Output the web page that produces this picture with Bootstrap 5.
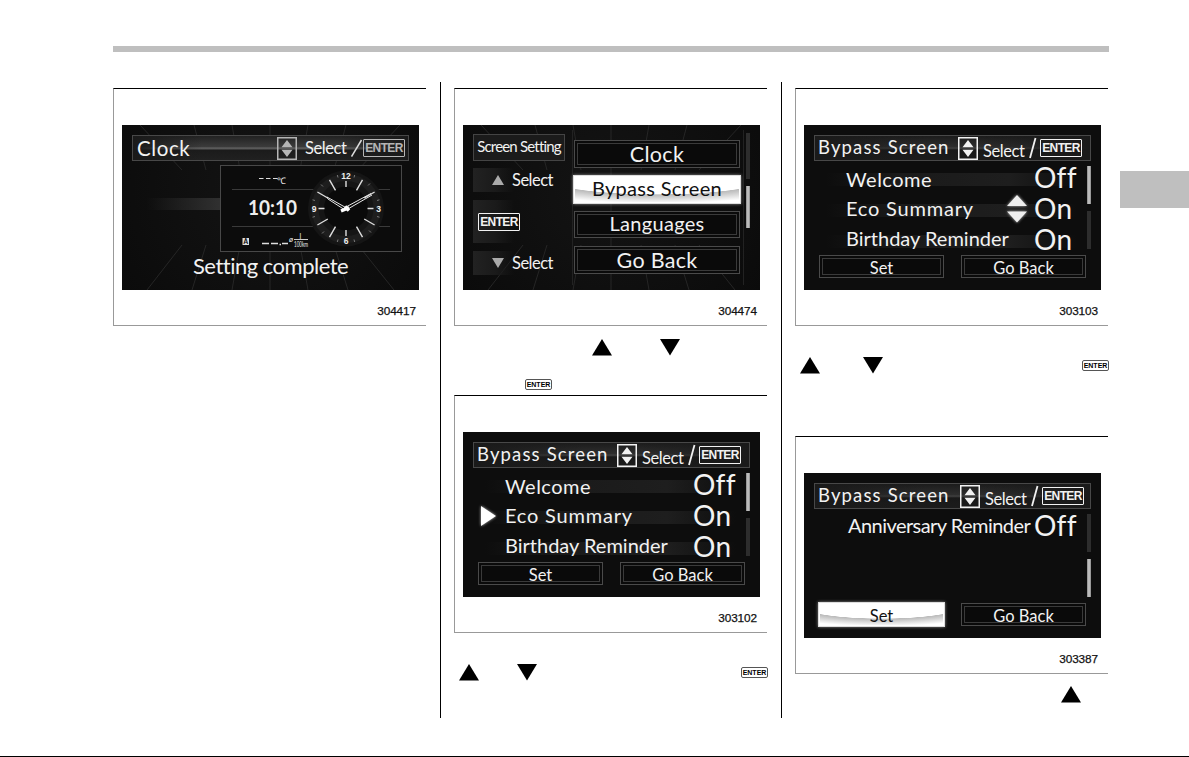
<!DOCTYPE html>
<html lang="en">

<head>
    <meta charset="UTF-8">
    <meta name="viewport" content="width=device-width, initial-scale=1">
    <title>Clock and bypass screen settings</title>
    <link href="https://cdn.jsdelivr.net/npm/bootstrap@5.3.3/dist/css/bootstrap.min.css" rel="stylesheet">
    <style>
        body {
            background-color: #fff;
            font-family: "Liberation Sans", Arial, sans-serif;
            color: #000;
        }

        svg {
            display: block;
            flex: none;
        }

        .sheet {
            width: 1189px;
            height: 757px;
            border-bottom: 1px solid #000;
        }

        .top-rule {
            width: 996px;
            height: 6px;
            margin: 46px 0 30px 113px;
            background-color: #bfbfbf;
        }

        .columns {
            height: 636px;
            margin-left: 113px;
        }

        .page-col {
            padding-top: 6px;
            border-right: 1px solid #000;
        }

        .page-col-1 { width: 328px; }
        .page-col-2 { width: 341px; padding-left: 13px; }
        .page-col-3 { width: 327px; padding-left: 13px; border-right: 0; }

        .side-tab {
            width: 69px;
            height: 37px;
            margin: 89px 0 0 11px;
            background-color: #bfbfbf;
        }

        /* figure frame */
        .shot {
            width: 313px;
            height: 238px;
            margin: 0;
            padding: 36px 0 0 8px;
            border-top: 1px solid #000;
            border-left: 1px solid #999;
            border-bottom: 1px solid #999;
        }

        .shot figcaption {
            padding: 13px 10px 0 0;
            font-size: 11.8px;
            line-height: 16px;
            letter-spacing: -.1px;
            color: #111;
            text-align: right;
            -webkit-text-stroke: .25px #111;
        }

        /* display */
        .lcd {
            width: 297px;
            height: 165px;
            background-color: #0d0d0d;
            color: #f2f2f2;
            font-family: Lato, "Liberation Sans", sans-serif;
            font-variant-ligatures: none;
            white-space: nowrap;
        }

        .scene { background: radial-gradient(circle at 50% 40%, #141414, #0b0b0b); }

        .titlebar {
            width: 277px;
            height: 26px;
            margin: 10px 0 1px 10px;
            padding-left: 3px;
            border: 1px solid #484848;
            background: linear-gradient(90deg, #1a1a1a 0, transparent 40%, transparent 60%, #1a1a1a), linear-gradient(#1c1c1c, #2e2e2e 46%, #444 50%, #191919 58%, #1c1c1c);
        }

        .titlebar.faded { background: linear-gradient(90deg, #1a1a1a 0, transparent 25%, transparent 75%, #1a1a1a), linear-gradient(#222, #3c3c3c 46%, #6a6a6a 50%, #1b1b1b 60%, #202020); }

        .bar-title { width: 140px; margin-bottom: 3px; font-size: 18.5px; line-height: 20px; letter-spacing: 1.15px; }
        .bar-select { width: 46px; margin: 6px 0 0 5px; font-size: 16.5px; line-height: 20px; letter-spacing: -.4px; }
        .bar-wide .bar-title { width: 142px; }

        .key-enter {
            width: 42px;
            height: 18px;
            border: 1.5px solid currentColor;
            border-radius: 1px;
            font: bold 12px/17px "Liberation Sans", sans-serif;
            text-align: center;
            letter-spacing: -.6px;
        }

        .option {
            height: 31px;
            background: linear-gradient(90deg, transparent 8%, #1a1a1a 35%, #1e1e1e 75%, transparent) 0 11px / 100% 13px no-repeat;
        }

        .option-lead { width: 42px; padding: 5px 0 0 17px; }
        .option-name { width: 188px; font-size: 20px; line-height: 29px; letter-spacing: .5px; }
        .option-name.first { line-height: 34px; }
        .option-name.eco { line-height: 30px; letter-spacing: .8px; }
        .option-name.tight { letter-spacing: 0; }
        .option-name.tighter { padding-left: 2px; line-height: 31px; letter-spacing: -.55px; }
        .option-value { font-size: 28px; line-height: 31px; letter-spacing: .3px; }
        .option-move { margin-right: 7px; }
        .eco-short { width: 161px; }
        .glow { filter: drop-shadow(0 0 1.5px #bbb); }

        .buttons { padding-left: 15px; gap: 17px; }

        .key-box {
            width: 125px;
            height: 23px;
            border: 1px solid #4a4a4a;
            outline: 1px solid #3a3a3a;
            outline-offset: -4px;
            background-color: #0a0a0a;
            font-size: 16.5px;
            line-height: 24px;
            text-align: center;
        }

        .key-lit {
            color: #111;
            border-color: #fff;
            outline: 0;
            box-shadow: 0 0 0 1px #ddd, 0 0 3px 1px #888;
            background: radial-gradient(ellipse 69% 70% at 50% 0, #fff 98%, #bbb 101%, #fff 150%);
        }

        .list-bar { width: 14px; padding-top: 4px; }
        .track, .thumb { width: 4px; height: 38px; }
        .track { background-color: #2d2d2d; }
        .thumb { background: linear-gradient(90deg, #888, #ccc, #888); }
        .bar-gap { margin-top: 7px; }

        /* clock display */
        .streak { width: 98px; height: 12px; margin-top: 33px; background: linear-gradient(90deg, transparent 25%, #303030); }
        .done-text { padding-left: 71px; font-size: 22px; line-height: 28px; letter-spacing: -.5px; }
        .bar-clock { width: 140px; margin-left: 1px; font-size: 20.5px; line-height: 20px; letter-spacing: .6px; }
        .dim { color: #b5b5b5; }

        /* menu display */
        .menu-left { width: 111px; padding: 9px 0 0 10px; }

        .menu-head {
            width: 92px;
            height: 27px;
            margin-bottom: 7px;
            border: 1px solid #444;
            background-color: #1b1b1b;
            font-size: 15px;
            line-height: 23px;
            letter-spacing: -.8px;
            text-align: center;
        }

        .pad {
            width: 92px;
            height: 24px;
            margin-bottom: 8px;
            background: linear-gradient(90deg, #222, #1a1a1a 25%, transparent 45%);
        }

        .pad-tall { height: 43px; padding-left: 5px; }
        .pad-mark { margin-left: 19px; fill: #aaa; }
        .pad-text { margin-left: 8px; font-size: 16.5px; line-height: 26px; letter-spacing: -.5px; }

        .menu-keys { width: 172px; padding-top: 15px; }
        .menu-keys .key-box { width: 166px; height: 27px; margin-bottom: 8px; font-size: 20px; line-height: 22px; letter-spacing: .3px; }
        .menu-keys .key-low { height: 28px; font-size: 21.5px; line-height: 27px; }

        /* marks below the figures */
        .tag-enter {
            width: 27px;
            height: 11px;
            border: 1px solid #555;
            border-radius: 2px;
            font-size: 7px;
            font-weight: bold;
            line-height: 9px;
            text-align: center;
        }

        .marks { height: 17px; }
        .marks-a { margin: 13px 0 0 138px; gap: 48px; }
        .tag-line { margin: 23px 0 5px 71px; }
        .marks-b { margin: 31px 0 0 5px; gap: 38px; }
        .marks-c { margin: 31px 0 62px 5px; gap: 43px; }
        .marks-d { margin: 12px 0 0 266px; }
        .marks-b .tag-enter { margin-left: 166px; }
        .marks-c .tag-enter { margin-left: 156px; }
    </style>
</head>

<body>
    <svg width="0" height="0" class="position-absolute">
        <defs>
            <g id="updown">
                <rect x=".75" y=".75" width="18.5" height="21.5" fill="none" stroke="currentColor" stroke-width="1.5" />
                <path d="M10 3 15.5 10.3h-11zM10 20 4.5 12.7h11z" fill="currentColor" />
            </g>
            <path id="slash" d="M1 21 6.5 1" stroke="currentColor" stroke-width="1.8" fill="none" />
            <path id="up" d="M10 0 20 16.5H0z" />
            <path id="down" d="M0 0h20L10 16.5z" />
            <path id="grid" d="M18 0 60 45M72 0 84 45M110 0 118 45M148 0V165M186 0 178 45M224 0 212 45M278 0 236 45M60 120 25 165M84 120 70 165M118 120 110 165M178 120 186 165M212 120 226 165M236 120 272 165" stroke="#262626" fill="none" />
        </defs>
    </svg>

    <div class="sheet overflow-hidden">
        <div class="top-rule"></div>
        <div class="columns d-flex">

            <div class="page-col page-col-1">
                <figure class="shot">
                    <div class="lcd scene position-relative overflow-hidden">
                        <svg class="position-absolute top-0 start-0" width="297" height="165"><use href="#grid" /></svg>
                        <div class="position-relative">
                            <div class="titlebar faded d-flex align-items-center mb-0">
                                <div class="bar-clock">Clock</div>
                                <svg class="dim" width="20" height="23"><use href="#updown" /></svg>
                                <div class="bar-select mt-0 ms-2">Select</div>
                                <svg width="12" height="18"><path d="M.5 17.5 10.5 1" stroke="#ddd" stroke-width="1.5" /></svg>
                                <div class="key-enter dim">ENTER</div>
                            </div>
                            <div class="d-flex pt-1">
                                <div class="streak"></div>
                                <svg width="182" height="87" font-family="Lato, sans-serif" fill="#eee">
                                    <rect x=".5" y=".5" width="181" height="86" fill="#0c0c0c" stroke="#484848" />
                                    <path d="M12 24.5h158M12 61.5h158" stroke="#3a3a3a" />
                                    <!-- outside temperature -->
                                    <path d="M39 13.5h4.5M46 13.5h4.5M53 13.5h4.5" stroke="#ddd" />
                                    <text x="57" y="19" font-size="9">℃</text>
                                    <text x="28" y="50" font-size="20" font-weight="bold" textLength="49" lengthAdjust="spacingAndGlyphs">10:10</text>
                                    <!-- average fuel consumption -->
                                    <rect x="22.5" y="73" width="6.5" height="7" fill="#ddd" />
                                    <text x="23.5" y="79" font-size="6.5" fill="#000" font-weight="bold">A</text>
                                    <path d="M42 78.500h7M51 78.500h7M62 78.500h6M59.500 79.500h1.500" stroke="#ddd" stroke-width="1.5" />
                                    <text x="69" y="77" font-size="8" font-style="italic">ø</text>
                                    <path d="M74 74.5h14" stroke="#ccc" />
                                    <text x="79.5" y="73.5" font-size="7">l</text>
                                    <text x="74" y="81.5" font-size="7.5" textLength="14" lengthAdjust="spacingAndGlyphs">100km</text>
                                    <!-- analog clock -->
                                    <circle cx="126" cy="43.5" r="38" fill="#151515" />
                                    <circle cx="126" cy="43.5" r="31" fill="none" stroke="#1e1e1e" stroke-width="7" />
                                    <circle cx="126" cy="43.5" r="22" fill="#0a0a0a" />
                                    <g transform="translate(126 43.5)">
                                        <path id="quarter" d="M0-27.5V-21.5M10.5-18.2 16.5-28.6M18.2-10.5 28.6-16.5" stroke="#ddd" stroke-width="1.4" />
                                        <use href="#quarter" transform="rotate(90)" />
                                        <use href="#quarter" transform="rotate(180)" />
                                        <use href="#quarter" transform="rotate(270)" />
                                        <path id="minor" d="M8-31 8.7-33.5M-8-31-8.7-33.5M22-23 24-25" stroke="#777" />
                                        <use href="#minor" transform="rotate(90)" />
                                        <use href="#minor" transform="rotate(180)" />
                                        <use href="#minor" transform="rotate(270)" />
                                        <path d="M0-.8-19-11.5-18-9.5-1 1.5M0-1.5 25-15M1 1 26-13.5" stroke="#e8e8e8" fill="none" />
                                        <path d="M-5 2.5 3-.8M-1-2 3 2" stroke="#fff" stroke-width="3.5" />
                                    </g>
                                    <g font-family="Liberation Sans, sans-serif" font-weight="bold" font-size="8.5" text-anchor="middle">
                                        <text x="126" y="14">12</text>
                                        <text x="158.5" y="46.5">3</text>
                                        <text x="126" y="79">6</text>
                                        <text x="94" y="46.5">9</text>
                                    </g>
                                </svg>
                            </div>
                            <div class="done-text">Setting complete</div>
                        </div>
                    </div>
                    <figcaption>304417</figcaption>
                </figure>
            </div>

            <div class="page-col page-col-2">
                <figure class="shot">
                    <div class="lcd scene position-relative">
                        <svg class="position-absolute top-0 start-0" width="297" height="165">
                            <use href="#grid" />
                            <path d="M109.5 5v155M280.5 5v155" stroke="#222" />
                        </svg>
                        <div class="d-flex position-relative">
                            <div class="menu-left">
                                <div class="menu-head">Screen Setting</div>
                                <div class="pad d-flex align-items-center">
                                    <svg class="pad-mark" width="12" height="10" viewBox="0 0 20 16.5"><use href="#up" /></svg>
                                    <div class="pad-text">Select</div>
                                </div>
                                <div class="pad pad-tall d-flex align-items-center">
                                    <div class="key-enter">ENTER</div>
                                </div>
                                <div class="pad d-flex align-items-center">
                                    <svg class="pad-mark" width="12" height="10" viewBox="0 0 20 16.5"><use href="#down" /></svg>
                                    <div class="pad-text">Select</div>
                                </div>
                            </div>
                            <div class="menu-keys">
                                <div class="key-box key-low">Clock</div>
                                <div class="key-box key-lit">Bypass Screen</div>
                                <div class="key-box">Languages</div>
                                <div class="key-box key-low">Go Back</div>
                            </div>
                            <div class="pt-2">
                                <div class="track" style="height: 46px"></div>
                                <div class="thumb bar-gap" style="height: 42px"></div>
                            </div>
                        </div>
                    </div>
                    <figcaption>304474</figcaption>
                </figure>

                <div class="marks marks-a d-flex">
                    <svg width="20" height="17"><use href="#up" /></svg>
                    <svg width="20" height="17"><use href="#down" /></svg>
                </div>
                <div class="tag-line d-flex"><div class="tag-enter">ENTER</div></div>

                <figure class="shot">
                    <div class="lcd d-flex flex-column">
                        <div class="titlebar d-flex align-items-center">
                            <div class="bar-title">Bypass Screen</div>
                            <svg width="20" height="23"><use href="#updown" /></svg>
                            <div class="bar-select">Select</div>
                            <svg width="11" height="22"><use href="#slash" /></svg>
                            <div class="key-enter">ENTER</div>
                        </div>
                        <div class="d-flex justify-content-between">
                            <div>
                                <div class="option d-flex">
                                    <div class="option-lead"></div>
                                    <div class="option-name first">Welcome</div>
                                    <div class="option-value">Off</div>
                                </div>
                                <div class="option d-flex">
                                    <div class="option-lead">
                                        <svg class="glow" width="17" height="22" fill="#fff"><path d="M1 1 16 11 1 21z" /></svg>
                                    </div>
                                    <div class="option-name eco">Eco Summary</div>
                                    <div class="option-value">On</div>
                                </div>
                                <div class="option d-flex">
                                    <div class="option-lead"></div>
                                    <div class="option-name tight">Birthday Reminder</div>
                                    <div class="option-value">On</div>
                                </div>
                            </div>
                            <div class="list-bar">
                                <div class="thumb"></div>
                                <div class="track bar-gap"></div>
                            </div>
                        </div>
                        <div class="buttons d-flex">
                            <div class="key-box">Set</div>
                            <div class="key-box">Go Back</div>
                        </div>
                    </div>
                    <figcaption>303102</figcaption>
                </figure>

                <div class="marks marks-b d-flex align-items-center">
                    <svg width="20" height="17"><use href="#up" /></svg>
                    <svg width="20" height="17"><use href="#down" /></svg>
                    <div class="tag-enter">ENTER</div>
                </div>
            </div>

            <div class="page-col page-col-3">
                <figure class="shot">
                    <div class="lcd d-flex flex-column">
                        <div class="titlebar d-flex align-items-center">
                            <div class="bar-title">Bypass Screen</div>
                            <svg width="20" height="23"><use href="#updown" /></svg>
                            <div class="bar-select">Select</div>
                            <svg width="11" height="22"><use href="#slash" /></svg>
                            <div class="key-enter">ENTER</div>
                        </div>
                        <div class="d-flex justify-content-between">
                            <div>
                                <div class="option d-flex">
                                    <div class="option-lead"></div>
                                    <div class="option-name first">Welcome</div>
                                    <div class="option-value">Off</div>
                                </div>
                                <div class="option d-flex">
                                    <div class="option-lead"></div>
                                    <div class="option-name eco eco-short">Eco Summary</div>
                                    <svg class="option-move glow" width="20" height="30" fill="#eee"><path d="M10 2 20 13H0zM0 18.5h20L10 29.5z" /></svg>
                                    <div class="option-value">On</div>
                                </div>
                                <div class="option d-flex">
                                    <div class="option-lead"></div>
                                    <div class="option-name tight">Birthday Reminder</div>
                                    <div class="option-value">On</div>
                                </div>
                            </div>
                            <div class="list-bar">
                                <div class="thumb"></div>
                                <div class="track bar-gap"></div>
                            </div>
                        </div>
                        <div class="buttons d-flex">
                            <div class="key-box">Set</div>
                            <div class="key-box">Go Back</div>
                        </div>
                    </div>
                    <figcaption>303103</figcaption>
                </figure>

                <div class="marks marks-c d-flex align-items-center">
                    <svg width="20" height="17"><use href="#up" /></svg>
                    <svg width="20" height="17"><use href="#down" /></svg>
                    <div class="tag-enter">ENTER</div>
                </div>

                <figure class="shot">
                    <div class="lcd d-flex flex-column">
                        <div class="titlebar bar-wide d-flex align-items-center">
                            <div class="bar-title">Bypass Screen</div>
                            <svg width="20" height="23"><use href="#updown" /></svg>
                            <div class="bar-select">Select</div>
                            <svg width="11" height="22"><use href="#slash" /></svg>
                            <div class="key-enter">ENTER</div>
                        </div>
                        <div class="d-flex justify-content-between" style="height: 93px">
                            <div class="d-flex">
                                <div class="option-lead"></div>
                                <div class="option-name tighter">Anniversary Reminder</div>
                                <div class="option-value">Off</div>
                            </div>
                            <div class="list-bar">
                                <div class="track"></div>
                                <div class="thumb bar-gap"></div>
                            </div>
                        </div>
                        <div class="buttons d-flex">
                            <div class="key-box key-lit">Set</div>
                            <div class="key-box">Go Back</div>
                        </div>
                    </div>
                    <figcaption>303387</figcaption>
                </figure>

                <div class="marks marks-d d-flex">
                    <svg width="20" height="17"><use href="#up" /></svg>
                </div>
            </div>

            <div class="side-tab"></div>
        </div>
    </div>

    <script src="https://cdn.jsdelivr.net/npm/bootstrap@5.3.3/dist/js/bootstrap.bundle.min.js"></script>
</body>

</html>
